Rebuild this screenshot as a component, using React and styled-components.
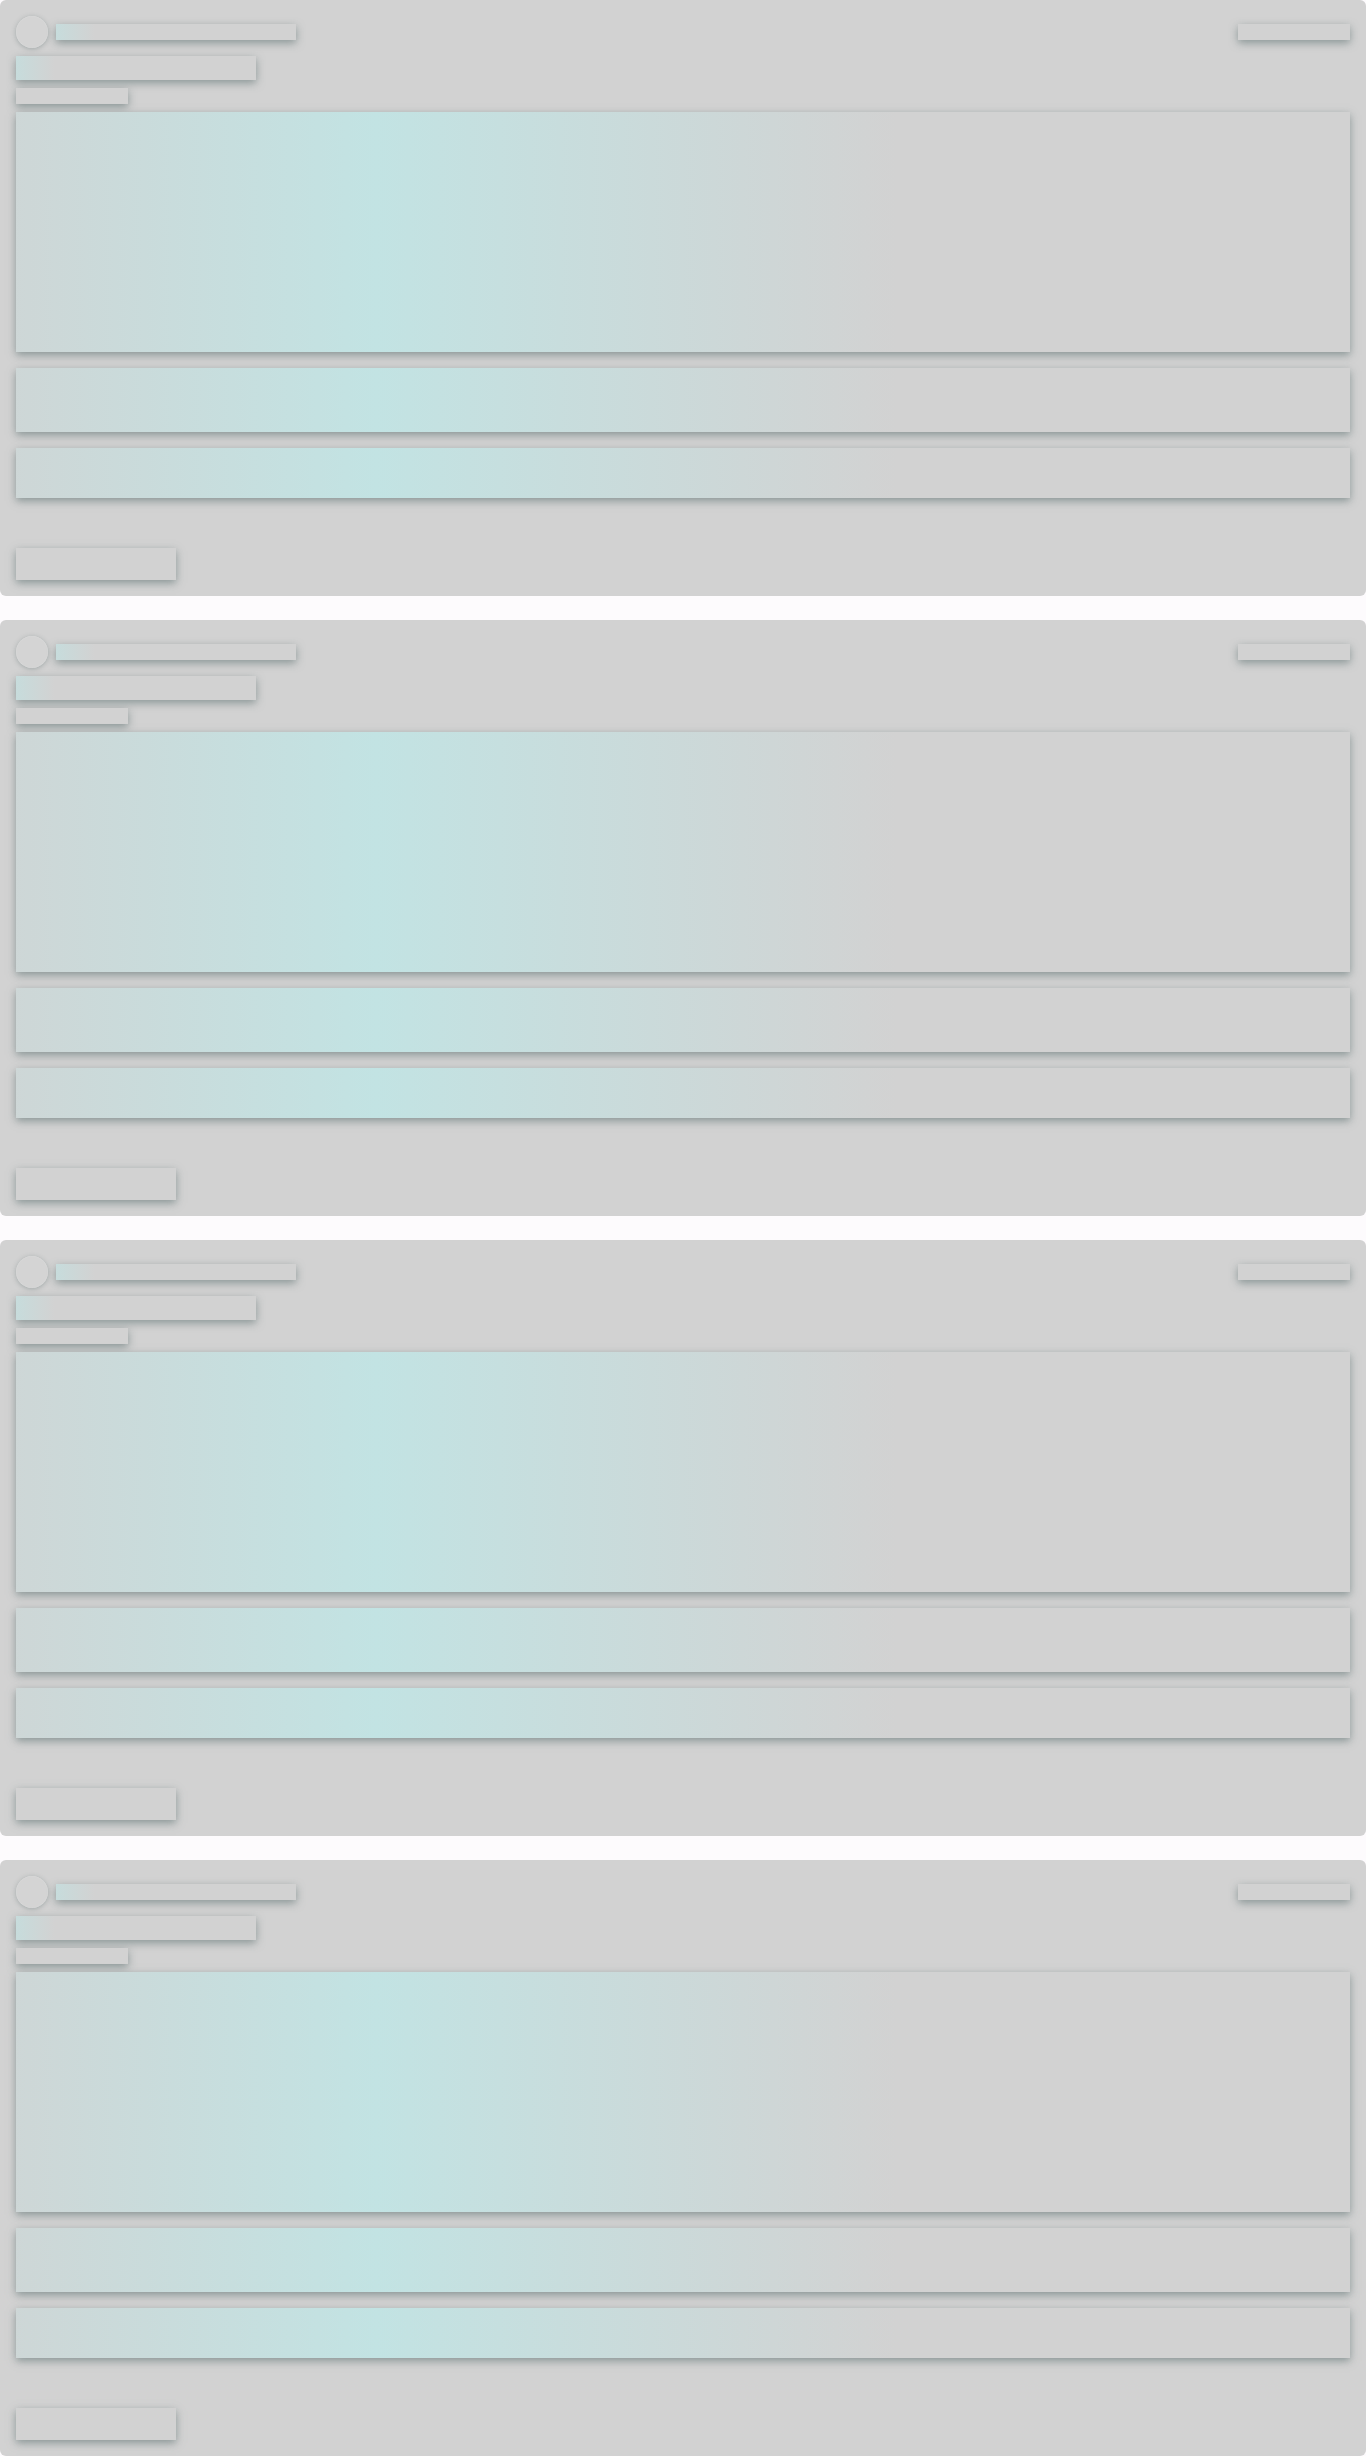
import React from 'react'
import styled, {createGlobalStyle, css} from 'styled-components'

const GlobalStyle = createGlobalStyle`
	html, body {
		margin: 0;
		padding: 0;
		background: #fdfbfd;
		font-family: "Liberation Sans", Arial, sans-serif;
	}
`

const shimmer = css`
	background-color: #d2d2d2;
	background-image: ${props => props.glow === 'wide'
		? 'linear-gradient(90deg, #d2d2d2 -10%, #c2e3e3 27%, #d2d2d2 66%, #d2d2d2 100%)'
		: props.glow === 'edge'
			? 'linear-gradient(90deg, #c7dcdc 0%, #d2d2d2 16%, #d2d2d2 100%)'
			: 'none'};
	box-shadow: 0 3px 8px rgba(90, 110, 110, 0.6);
`

const Page = styled.div`
	display: flex;
	flex-direction: column;
	gap: 24px;
`

const Card = styled.div`
	height: 596px;
	box-sizing: border-box;
	padding: 16px;
	background: #d2d2d2;
	border-radius: 6px;
	display: flex;
	flex-direction: column;
`

const Header = styled.div`
	display: flex;
	align-items: center;
	height: 32px;
`

const Avatar = styled.div`
	width: 32px;
	height: 32px;
	border-radius: 50%;
	background: #d4d4d4;
	box-shadow: 0 1px 5px rgba(100, 115, 115, 0.45), inset 0 0 1px rgba(255, 255, 255, 0.6);
	flex-shrink: 0;
`

const Line = styled.div`
	${shimmer}
	width: ${props => props.w}px;
	height: ${props => props.h}px;
	margin-left: ${props => props.ml || 0}px;
	margin-top: ${props => props.mt || 0}px;
	flex-shrink: 0;
`

const Spacer = styled.div`
	flex: 1;
`

const Block = styled.div`
	${shimmer}
	height: ${props => props.h}px;
	margin-top: ${props => props.mt}px;
`

const Button = styled.div`
	${shimmer}
	width: 160px;
	height: 32px;
	margin-top: 50px;
`

const SkeletonCard = () => (
	<Card>
		<Header>
			<Avatar />
			<Line w={240} h={16} ml={8} glow="edge" />
			<Spacer />
			<Line w={112} h={16} />
		</Header>
		<Line w={240} h={24} mt={8} glow="edge" />
		<Line w={112} h={16} mt={8} />
		<Block h={240} mt={8} glow="wide" />
		<Block h={64} mt={16} glow="wide" />
		<Block h={50} mt={16} glow="wide" />
		<Button />
	</Card>
)

const App = () => (
	<>
		<GlobalStyle />
		<Page>
			{[0, 1, 2, 3].map(i => <SkeletonCard key={i} />)}
		</Page>
	</>
)

export default App
